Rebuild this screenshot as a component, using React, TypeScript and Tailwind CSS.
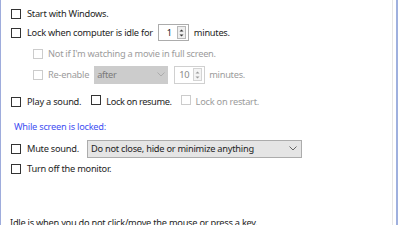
import React from "react";

const font = { fontFamily: '"Noto Sans", "Open Sans", sans-serif' };

function Check({ disabled = false }: { disabled?: boolean }) {
  return (
    <span
      className={
        "inline-block w-[10px] h-[10px] shrink-0 border bg-white " +
        (disabled ? "border-[#cccccc]" : "border-[#333333]")
      }
    />
  );
}

function Spinner({ disabled = false }: { disabled?: boolean }) {
  const c = disabled ? "#9a9a9a" : "#333333";
  return (
    <span
      className={
        "flex flex-col w-[9px] h-[13px] border " +
        (disabled ? "border-[#d4d4d4] bg-[#f4f4f4]" : "border-[#b8b8b8] bg-[#eeeeee]")
      }
    >
      <svg width="7" height="5" viewBox="0 0 7 5" className="mt-[1px]">
        <path d="M1.5 3.5 L3.5 1.5 L5.5 3.5 Z" fill={c} />
      </svg>
      <svg width="7" height="5" viewBox="0 0 7 5">
        <path d="M1.5 1.5 L3.5 3.5 L5.5 1.5 Z" fill={c} />
      </svg>
    </span>
  );
}

function Chevron({ color }: { color: string }) {
  return (
    <svg width="8" height="5" viewBox="0 0 8 5">
      <path d="M0.5 0.5 L4 4 L7.5 0.5" fill="none" stroke={color} strokeWidth="0.9" />
    </svg>
  );
}

export default function App() {
  return (
    <div
      className="relative w-[400px] h-[225px] overflow-hidden bg-white text-[9.25px] tracking-[-0.25px] text-[#1e1e1e] leading-[13px]"
      style={font}
    >
      <div className="absolute left-0 top-0 w-[1px] h-full bg-[#9eacdc]" />
      <div className="absolute left-[392px] top-0 w-[1px] h-full bg-[#e6e6e6]" />
      <div className="absolute left-[396px] top-0 w-[2px] h-full bg-[#9fb0de]" />

      <div className="flex flex-col pt-[4px]">
        <div className="flex items-center h-[19px] pl-[11px] gap-[6px]">
          <Check />
          <span>Start with Windows.</span>
        </div>
        <div className="flex items-center h-[19px] pl-[11px]">
          <Check />
          <span className="ml-[6px]">Lock when computer is idle for</span>
          <span className="ml-[5px] flex items-center justify-between w-[31px] h-[17px] border border-[#acacac] bg-white pl-[8px] pr-[2px]">
            <span>1</span>
            <Spinner />
          </span>
          <span className="ml-[5px]">minutes.</span>
        </div>
        <div className="flex items-center h-[19px] mt-[2px] pl-[33px] text-[#9c9c9c]">
          <Check disabled />
          <span className="ml-[5px]">Not if I'm watching a movie in full screen.</span>
        </div>
        <div className="flex items-center h-[19px] mt-[2px] pl-[33px] text-[#9c9c9c]">
          <Check disabled />
          <span className="ml-[5px]">Re-enable</span>
          <span className="ml-[5px] flex items-center justify-between w-[74px] h-[18px] bg-[#cccccc] pl-[3px] pr-[3px] text-[#7a7a7a]">
            <span>after</span>
            <Chevron color="#a8a8a8" />
          </span>
          <span className="ml-[6px] flex items-center justify-between w-[31px] h-[18px] border border-[#d0d0d0] bg-white pl-[4px] pr-[2px] text-[#8a8a8a]">
            <span>10</span>
            <Spinner disabled />
          </span>
          <span className="ml-[4px]">minutes.</span>
        </div>
        <div className="flex items-center h-[19px] mt-[8px] pl-[11px]">
          <Check />
          <span className="ml-[6px]">Play a sound.</span>
          <span className="ml-[10px]">
            <Check />
          </span>
          <span className="ml-[5px] tracking-[-0.4px]">Lock on resume.</span>
          <span className="ml-[9px]">
            <Check disabled />
          </span>
          <span className="ml-[5px] text-[#9c9c9c]">Lock on restart.</span>
        </div>
        <div className="flex items-center h-[19px] mt-[6px] pl-[14px] text-[#3f4ff2]">
          While screen is locked:
        </div>
        <div className="flex items-center h-[19px] mt-[3px] pl-[11px]">
          <Check />
          <span className="ml-[6px]">Mute sound.</span>
          <span className="ml-[8px] flex items-center justify-between w-[215px] h-[18px] border border-[#acacac] bg-[#e5e5e5] pl-[3px] pr-[4px]">
            <span>Do not close, hide or minimize anything</span>
            <Chevron color="#555555" />
          </span>
        </div>
        <div className="flex items-center h-[19px] mt-[1px] pl-[11px]">
          <Check />
          <span className="ml-[6px]">Turn off the monitor.</span>
        </div>
        <div className="mt-[38px] pl-[10px] h-[13px]">
          Idle is when you do not click/move the mouse or press a key.
        </div>
      </div>
    </div>
  );
}
